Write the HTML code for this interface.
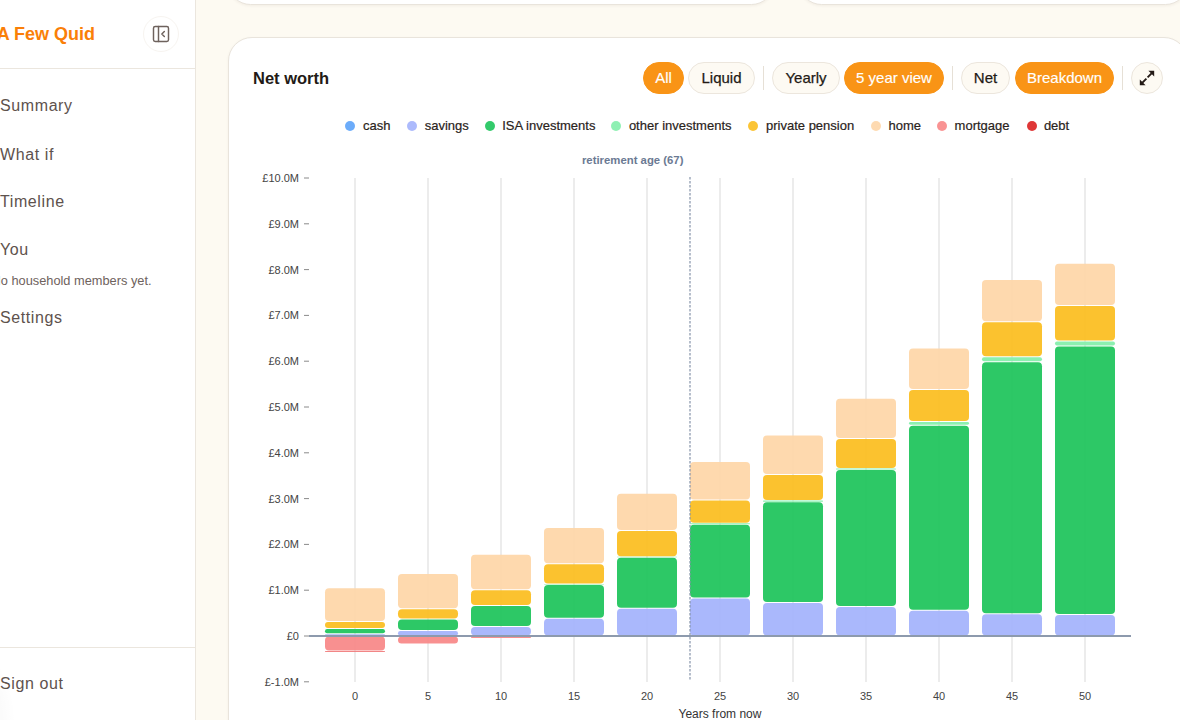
<!DOCTYPE html>
<html><head><meta charset="utf-8">
<style>
*{box-sizing:border-box;margin:0;padding:0}
html,body{width:1180px;height:720px;overflow:hidden;background:#fdfaf2;font-family:"Liberation Sans",sans-serif}
.side{position:absolute;left:0;top:0;width:196px;height:720px;background:#fff;border-right:1px solid #ebe6de}
.brand{position:absolute;left:-3.3px;top:25.1px;line-height:18px;font-size:18px;font-weight:bold;color:#fa7f08;white-space:nowrap}
.coll{position:absolute;left:143px;top:16px;width:36px;height:36px;border-radius:50%;border:1px solid #f7f4f0}
.coll svg{position:absolute;left:6.6px;top:7.3px}
.hr1{position:absolute;left:0;top:68px;width:195px;height:1px;background:#ebe6de}
.hr2{position:absolute;left:0;top:647px;width:195px;height:1px;background:#ebe6de}
.nav{position:absolute;left:0;font-size:16px;line-height:20px;letter-spacing:0.6px;color:#5e524d;white-space:nowrap}
.sub{position:absolute;left:-8.5px;top:273.2px;font-size:12.8px;color:#6e625d;white-space:nowrap}
.card-top{position:absolute;top:-40px;height:45px;background:#fff;border:1px solid #e9e4dc;border-radius:24px;box-shadow:0 1px 3px rgba(60,40,20,.06)}
.card{position:absolute;left:228px;top:37px;width:960px;height:720px;background:#fff;border:1px solid #e9e4dc;border-radius:24px;box-shadow:0 1px 3px rgba(60,40,20,.05)}
.title{position:absolute;left:253px;top:69px;font-size:16.5px;font-weight:bold;color:#231a16}
.btn{position:absolute;top:62px;height:32px;border-radius:16px;font-size:15px;line-height:30px;text-align:center;color:#231a16;background:#fdfaf3;border:1px solid #ece6dd;-webkit-text-stroke:0.25px currentColor}
.btn.on{background:#f99416;border-color:#f99416;color:#fff;-webkit-text-stroke:0.15px #fff}
.sep{position:absolute;top:66px;width:1px;height:24px;background:#e6e0d6}
.ld{position:absolute;top:120.5px;width:10px;height:10px;border-radius:50%}
.lt{position:absolute;top:117px;font-size:13px;line-height:17px;color:#2a2320;white-space:nowrap;-webkit-text-stroke:0.2px currentColor}
svg.chart{position:absolute;left:0;top:0}
.tk{font-size:11px;fill:#444}
.axl{font-size:12px;fill:#333}
.ret{font-size:11.35px;font-weight:bold;fill:#6b7a93}
</style></head><body>
<div class="side">
  <div class="brand">A Few Quid</div>
  <div class="coll"><svg width="20" height="20" viewBox="0 0 24 24" fill="none" stroke="#6e625d" stroke-width="1.75" stroke-linecap="round" stroke-linejoin="round"><rect x="3" y="3" width="18" height="18" rx="2"/><path d="M9 3v18"/><path d="m16 15-3-3 3-3"/></svg></div>
  <div class="hr1"></div>
  <div class="nav" style="top:96.3px">Summary</div>
  <div class="nav" style="top:144.5px">What if</div>
  <div class="nav" style="top:192.1px">Timeline</div>
  <div class="nav" style="top:240.3px">You</div>
  <div class="sub">No household members yet.</div>
  <div class="nav" style="top:308.1px">Settings</div>
  <div class="hr2"></div>
  <div style="position:absolute;left:-194px;top:616px;width:208px;height:208px;border-radius:50%;background:radial-gradient(circle,rgba(0,0,0,0.018) 60%,rgba(0,0,0,0) 72%)"></div>
  <div class="nav" style="top:674.2px">Sign out</div>
</div>
<div class="card-top" style="left:228px;width:546px"></div>
<div class="card-top" style="left:799px;width:389px"></div>
<div class="card"></div>
<div class="title">Net worth</div>
<div class="btn on" style="left:643px;width:41px">All</div>
<div class="btn" style="left:688px;width:67px">Liquid</div>
<div class="sep" style="left:763px"></div>
<div class="btn" style="left:772px;width:68px">Yearly</div>
<div class="btn on" style="left:844px;width:100px">5 year view</div>
<div class="sep" style="left:952px"></div>
<div class="btn" style="left:961px;width:49px">Net</div>
<div class="btn on" style="left:1015px;width:99px">Breakdown</div>
<div class="sep" style="left:1122px"></div>
<div class="btn" style="left:1131px;width:32px;border-radius:50%"><svg width="32" height="32" style="position:absolute;left:-1px;top:-1px" viewBox="0 0 32 32"><path d="M20.8 11.2 L16.6 15.4 M11.2 20.8 L15.4 16.6" stroke="#231a16" stroke-width="1.9"/><path d="M23.2 8.8 L23.2 14.6 L17.4 8.8 Z" fill="#231a16"/><path d="M8.8 23.2 L8.8 17.4 L14.6 23.2 Z" fill="#231a16"/></svg></div>
<i class="ld" style="left:345px;background:#60a5fa;opacity:.92"></i><span class="lt" style="left:363.0px">cash</span><i class="ld" style="left:407px;background:#a5b4fc;opacity:.92"></i><span class="lt" style="left:424.7px">savings</span><i class="ld" style="left:485px;background:#22c55e;opacity:.92"></i><span class="lt" style="left:502.2px">ISA investments</span><i class="ld" style="left:611px;background:#86efac;opacity:.92"></i><span class="lt" style="left:628.9px">other investments</span><i class="ld" style="left:748px;background:#fbbf24;opacity:.92"></i><span class="lt" style="left:766.0px">private pension</span><i class="ld" style="left:871px;background:#fed7aa;opacity:.92"></i><span class="lt" style="left:888.5px">home</span><i class="ld" style="left:937px;background:#f88a8a;opacity:.92"></i><span class="lt" style="left:954.6px">mortgage</span><i class="ld" style="left:1027px;background:#dc2626;opacity:.92"></i><span class="lt" style="left:1043.9px">debt</span>
<svg class="chart" width="1180" height="720" viewBox="0 0 1180 720">
<line x1="355" y1="178" x2="355" y2="682" stroke="#e6e6e6" stroke-width="1.5"/>
<line x1="428" y1="178" x2="428" y2="682" stroke="#e6e6e6" stroke-width="1.5"/>
<line x1="501" y1="178" x2="501" y2="682" stroke="#e6e6e6" stroke-width="1.5"/>
<line x1="574" y1="178" x2="574" y2="682" stroke="#e6e6e6" stroke-width="1.5"/>
<line x1="647" y1="178" x2="647" y2="682" stroke="#e6e6e6" stroke-width="1.5"/>
<line x1="720" y1="178" x2="720" y2="682" stroke="#e6e6e6" stroke-width="1.5"/>
<line x1="793" y1="178" x2="793" y2="682" stroke="#e6e6e6" stroke-width="1.5"/>
<line x1="866" y1="178" x2="866" y2="682" stroke="#e6e6e6" stroke-width="1.5"/>
<line x1="939" y1="178" x2="939" y2="682" stroke="#e6e6e6" stroke-width="1.5"/>
<line x1="1012" y1="178" x2="1012" y2="682" stroke="#e6e6e6" stroke-width="1.5"/>
<line x1="1085" y1="178" x2="1085" y2="682" stroke="#e6e6e6" stroke-width="1.5"/>
<line x1="304" y1="178.0" x2="309" y2="178.0" stroke="#8a8a8a" stroke-width="1"/>
<text x="299" y="182.0" text-anchor="end" class="tk">£10.0M</text>
<line x1="304" y1="223.8" x2="309" y2="223.8" stroke="#8a8a8a" stroke-width="1"/>
<text x="299" y="227.8" text-anchor="end" class="tk">£9.0M</text>
<line x1="304" y1="269.6" x2="309" y2="269.6" stroke="#8a8a8a" stroke-width="1"/>
<text x="299" y="273.6" text-anchor="end" class="tk">£8.0M</text>
<line x1="304" y1="315.4" x2="309" y2="315.4" stroke="#8a8a8a" stroke-width="1"/>
<text x="299" y="319.4" text-anchor="end" class="tk">£7.0M</text>
<line x1="304" y1="361.2" x2="309" y2="361.2" stroke="#8a8a8a" stroke-width="1"/>
<text x="299" y="365.2" text-anchor="end" class="tk">£6.0M</text>
<line x1="304" y1="407.0" x2="309" y2="407.0" stroke="#8a8a8a" stroke-width="1"/>
<text x="299" y="411.0" text-anchor="end" class="tk">£5.0M</text>
<line x1="304" y1="452.8" x2="309" y2="452.8" stroke="#8a8a8a" stroke-width="1"/>
<text x="299" y="456.8" text-anchor="end" class="tk">£4.0M</text>
<line x1="304" y1="498.6" x2="309" y2="498.6" stroke="#8a8a8a" stroke-width="1"/>
<text x="299" y="502.6" text-anchor="end" class="tk">£3.0M</text>
<line x1="304" y1="544.4" x2="309" y2="544.4" stroke="#8a8a8a" stroke-width="1"/>
<text x="299" y="548.4" text-anchor="end" class="tk">£2.0M</text>
<line x1="304" y1="590.2" x2="309" y2="590.2" stroke="#8a8a8a" stroke-width="1"/>
<text x="299" y="594.2" text-anchor="end" class="tk">£1.0M</text>
<line x1="304" y1="636.0" x2="309" y2="636.0" stroke="#8a8a8a" stroke-width="1"/>
<text x="299" y="640.0" text-anchor="end" class="tk">£0</text>
<line x1="304" y1="681.8" x2="309" y2="681.8" stroke="#8a8a8a" stroke-width="1"/>
<text x="299" y="685.8" text-anchor="end" class="tk">£-1.0M</text>
<rect x="325.00" y="634.30" width="60.0" height="1.20" rx="0.60" fill="#a5b4fc" fill-opacity="0.95"/>
<rect x="325.00" y="629.00" width="60.0" height="4.30" rx="2.15" fill="#22c55e" fill-opacity="0.95"/>
<rect x="325.00" y="622.00" width="60.0" height="6.00" rx="3.00" fill="#fbbf24" fill-opacity="0.95"/>
<rect x="325.00" y="588.30" width="60.0" height="32.70" rx="4.00" fill="#fed7aa" fill-opacity="0.95"/>
<rect x="325.00" y="636.50" width="60.0" height="14.00" rx="4.00" fill="#f88a8a" fill-opacity="0.95"/>
<rect x="325.00" y="651.00" width="60.0" height="1.00" rx="0.50" fill="#f08080" fill-opacity="0.95"/>
<rect x="398.00" y="631.00" width="60.0" height="4.50" rx="2.25" fill="#a5b4fc" fill-opacity="0.95"/>
<rect x="398.00" y="619.50" width="60.0" height="10.50" rx="4.00" fill="#22c55e" fill-opacity="0.95"/>
<rect x="398.00" y="609.20" width="60.0" height="9.30" rx="4.00" fill="#fbbf24" fill-opacity="0.95"/>
<rect x="398.00" y="574.10" width="60.0" height="34.10" rx="4.00" fill="#fed7aa" fill-opacity="0.95"/>
<rect x="398.00" y="636.50" width="60.0" height="7.00" rx="3.50" fill="#f88a8a" fill-opacity="0.95"/>
<rect x="471.00" y="627.00" width="60.0" height="8.50" rx="4.00" fill="#a5b4fc" fill-opacity="0.95"/>
<rect x="471.00" y="606.00" width="60.0" height="20.00" rx="4.00" fill="#22c55e" fill-opacity="0.95"/>
<rect x="471.00" y="590.30" width="60.0" height="14.70" rx="4.00" fill="#fbbf24" fill-opacity="0.95"/>
<rect x="471.00" y="554.80" width="60.0" height="34.50" rx="4.00" fill="#fed7aa" fill-opacity="0.95"/>
<rect x="471.00" y="636.50" width="60.0" height="1.40" rx="0.70" fill="#f88a8a" fill-opacity="0.95"/>
<rect x="544.00" y="618.80" width="60.0" height="16.70" rx="4.00" fill="#a5b4fc" fill-opacity="0.95"/>
<rect x="544.00" y="584.90" width="60.0" height="32.90" rx="4.00" fill="#22c55e" fill-opacity="0.95"/>
<rect x="544.00" y="584.00" width="60.0" height="0.40" rx="0.20" fill="#86efac" fill-opacity="0.95"/>
<rect x="544.00" y="564.30" width="60.0" height="19.20" rx="4.00" fill="#fbbf24" fill-opacity="0.95"/>
<rect x="544.00" y="528.10" width="60.0" height="35.20" rx="4.00" fill="#fed7aa" fill-opacity="0.95"/>
<rect x="617.00" y="608.80" width="60.0" height="26.70" rx="4.00" fill="#a5b4fc" fill-opacity="0.95"/>
<rect x="617.00" y="557.70" width="60.0" height="50.10" rx="4.00" fill="#22c55e" fill-opacity="0.95"/>
<rect x="617.00" y="556.80" width="60.0" height="0.40" rx="0.20" fill="#86efac" fill-opacity="0.95"/>
<rect x="617.00" y="531.00" width="60.0" height="25.30" rx="4.00" fill="#fbbf24" fill-opacity="0.95"/>
<rect x="617.00" y="493.70" width="60.0" height="36.30" rx="4.00" fill="#fed7aa" fill-opacity="0.95"/>
<rect x="690.00" y="598.50" width="60.0" height="37.00" rx="4.00" fill="#a5b4fc" fill-opacity="0.95"/>
<rect x="690.00" y="524.80" width="60.0" height="72.70" rx="4.00" fill="#22c55e" fill-opacity="0.95"/>
<rect x="690.00" y="523.20" width="60.0" height="1.10" rx="0.55" fill="#86efac" fill-opacity="0.95"/>
<rect x="690.00" y="500.40" width="60.0" height="22.30" rx="4.00" fill="#fbbf24" fill-opacity="0.95"/>
<rect x="690.00" y="462.10" width="60.0" height="37.30" rx="4.00" fill="#fed7aa" fill-opacity="0.95"/>
<rect x="763.00" y="603.00" width="60.0" height="32.50" rx="4.00" fill="#a5b4fc" fill-opacity="0.95"/>
<rect x="763.00" y="502.30" width="60.0" height="99.70" rx="4.00" fill="#22c55e" fill-opacity="0.95"/>
<rect x="763.00" y="500.60" width="60.0" height="1.20" rx="0.60" fill="#86efac" fill-opacity="0.95"/>
<rect x="763.00" y="475.00" width="60.0" height="25.10" rx="4.00" fill="#fbbf24" fill-opacity="0.95"/>
<rect x="763.00" y="435.40" width="60.0" height="38.60" rx="4.00" fill="#fed7aa" fill-opacity="0.95"/>
<rect x="836.00" y="607.00" width="60.0" height="28.50" rx="4.00" fill="#a5b4fc" fill-opacity="0.95"/>
<rect x="836.00" y="470.00" width="60.0" height="136.00" rx="4.00" fill="#22c55e" fill-opacity="0.95"/>
<rect x="836.00" y="468.40" width="60.0" height="1.10" rx="0.55" fill="#86efac" fill-opacity="0.95"/>
<rect x="836.00" y="439.10" width="60.0" height="28.80" rx="4.00" fill="#fbbf24" fill-opacity="0.95"/>
<rect x="836.00" y="398.80" width="60.0" height="39.30" rx="4.00" fill="#fed7aa" fill-opacity="0.95"/>
<rect x="909.00" y="610.80" width="60.0" height="24.70" rx="4.00" fill="#a5b4fc" fill-opacity="0.95"/>
<rect x="909.00" y="425.70" width="60.0" height="184.10" rx="4.00" fill="#22c55e" fill-opacity="0.95"/>
<rect x="909.00" y="422.00" width="60.0" height="2.70" rx="1.35" fill="#86efac" fill-opacity="0.95"/>
<rect x="909.00" y="390.00" width="60.0" height="31.00" rx="4.00" fill="#fbbf24" fill-opacity="0.95"/>
<rect x="909.00" y="348.50" width="60.0" height="40.50" rx="4.00" fill="#fed7aa" fill-opacity="0.95"/>
<rect x="982.00" y="614.30" width="60.0" height="21.20" rx="4.00" fill="#a5b4fc" fill-opacity="0.95"/>
<rect x="982.00" y="362.20" width="60.0" height="251.10" rx="4.00" fill="#22c55e" fill-opacity="0.95"/>
<rect x="982.00" y="357.30" width="60.0" height="3.90" rx="1.95" fill="#86efac" fill-opacity="0.95"/>
<rect x="982.00" y="322.20" width="60.0" height="34.10" rx="4.00" fill="#fbbf24" fill-opacity="0.95"/>
<rect x="982.00" y="280.10" width="60.0" height="41.10" rx="4.00" fill="#fed7aa" fill-opacity="0.95"/>
<rect x="1055.00" y="614.90" width="60.0" height="20.60" rx="4.00" fill="#a5b4fc" fill-opacity="0.95"/>
<rect x="1055.00" y="346.40" width="60.0" height="267.50" rx="4.00" fill="#22c55e" fill-opacity="0.95"/>
<rect x="1055.00" y="341.50" width="60.0" height="3.90" rx="1.95" fill="#86efac" fill-opacity="0.95"/>
<rect x="1055.00" y="305.90" width="60.0" height="34.60" rx="4.00" fill="#fbbf24" fill-opacity="0.95"/>
<rect x="1055.00" y="263.80" width="60.0" height="41.10" rx="4.00" fill="#fed7aa" fill-opacity="0.95"/>
<line x1="309" y1="636" x2="1131" y2="636" stroke="#8d9aad" stroke-width="2"/>
<text x="355.0" y="700" text-anchor="middle" class="tk">0</text>
<text x="428.0" y="700" text-anchor="middle" class="tk">5</text>
<text x="501.0" y="700" text-anchor="middle" class="tk">10</text>
<text x="574.0" y="700" text-anchor="middle" class="tk">15</text>
<text x="647.0" y="700" text-anchor="middle" class="tk">20</text>
<text x="720.0" y="700" text-anchor="middle" class="tk">25</text>
<text x="793.0" y="700" text-anchor="middle" class="tk">30</text>
<text x="866.0" y="700" text-anchor="middle" class="tk">35</text>
<text x="939.0" y="700" text-anchor="middle" class="tk">40</text>
<text x="1012.0" y="700" text-anchor="middle" class="tk">45</text>
<text x="1085.0" y="700" text-anchor="middle" class="tk">50</text>
<text x="720" y="718" text-anchor="middle" class="axl">Years from now</text>
<line x1="690" y1="177" x2="690" y2="681" stroke="#8593aa" stroke-width="1.2" stroke-dasharray="2.5 1.5"/>
<text x="632.7" y="164" text-anchor="middle" class="ret">retirement age (67)</text>
</svg>
</body></html>
